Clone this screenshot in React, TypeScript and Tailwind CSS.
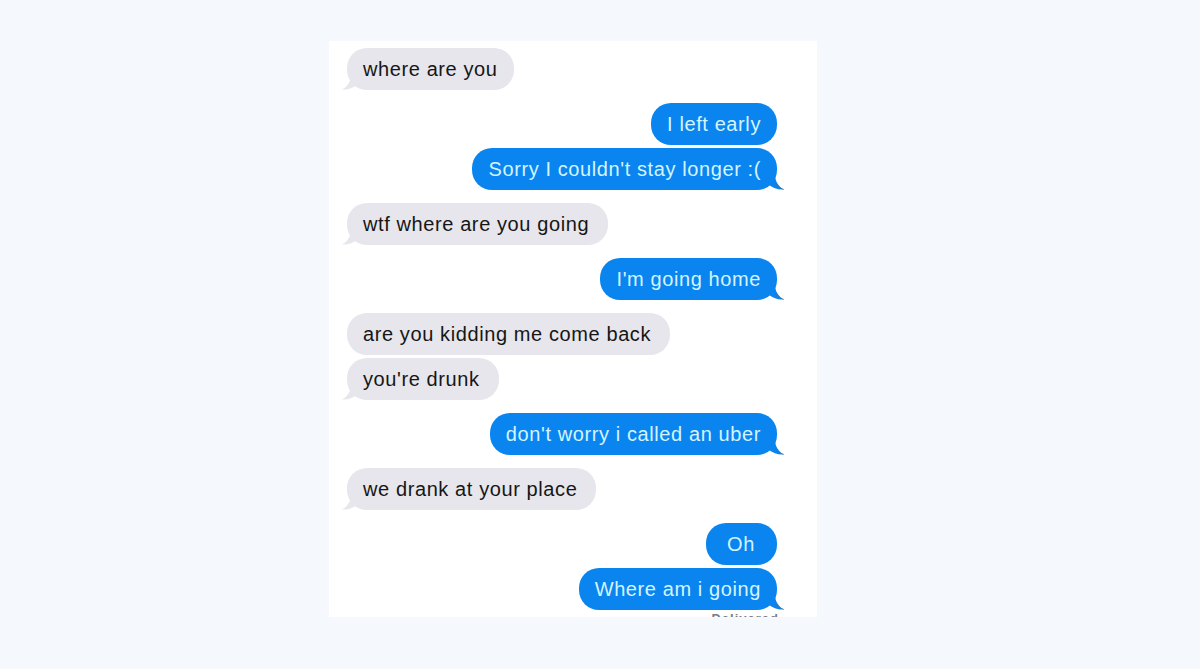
import React from 'react';

type Msg = { text: string; me: boolean; tail: boolean; gap: 'sm' | 'lg'; pad?: string };

const messages: Msg[] = [
  { text: 'where are you', me: false, tail: true, gap: 'lg', pad: 'pl-4 pr-4' },
  { text: 'I left early', me: true, tail: false, gap: 'lg' },
  { text: "Sorry I couldn't stay longer :(", me: true, tail: true, gap: 'sm' },
  { text: 'wtf where are you going', me: false, tail: true, gap: 'lg' },
  { text: "I'm going home", me: true, tail: true, gap: 'lg' },
  { text: 'are you kidding me come back', me: false, tail: false, gap: 'lg' },
  { text: "you're drunk", me: false, tail: true, gap: 'sm' },
  { text: "don't worry i called an uber", me: true, tail: true, gap: 'lg' },
  { text: 'we drank at your place', me: false, tail: true, gap: 'lg' },
  { text: 'Oh', me: true, tail: false, gap: 'lg', pad: 'pl-[21px] pr-[22px]' },
  { text: 'Where am i going', me: true, tail: true, gap: 'sm' },
];

const Bubble = ({ m, first }: { m: Msg; first: boolean }) => {
  const mt = first ? 'mt-0' : m.gap === 'sm' ? 'mt-[3px]' : 'mt-[13px]';
  const pad = m.pad ?? (m.me ? 'pl-4 pr-4' : 'pl-4 pr-[19px]');
  return (
    <div className={`flex ${m.me ? 'justify-end pr-[40px]' : 'justify-start pl-[18px]'} ${mt}`}>
      <div
        className={`relative h-[42px] flex items-center ${pad} rounded-[20px] text-[20px] tracking-[0.6px] leading-none ${
          m.me ? 'bg-[#0a85ef] text-[#d3f4ff]' : 'bg-[#e6e6ec] text-[#161616]'
        }`}
      >
        {m.text}
        {m.tail && m.me && (
          <svg className="absolute -right-[8px] bottom-0" width="18" height="16" viewBox="0 0 18 16">
            <path d="M0 0 L8 0 C8 8 12 13 17 15.5 C11 16 6 14 2 11 Z" fill="#0a85ef" />
            <path d="M8 9 C10 12 13 14 17 15.5" stroke="#5a6470" strokeWidth="1" fill="none" opacity="0.5" />
          </svg>
        )}
        {m.tail && !m.me && (
          <svg className="absolute -left-[6px] bottom-0" width="18" height="16" viewBox="0 0 18 16">
            <path d="M18 0 L10 0 C10 8 6 13 1 15.5 C7 16 12 14 16 11 Z" fill="#e6e6ec" />
          </svg>
        )}
      </div>
    </div>
  );
};

export default function App() {
  return (
    <div className="min-h-[669px] w-[1200px] bg-[#f5f9fd] pt-[41px] pl-[329px]" style={{ fontFamily: '"Liberation Sans", Arial, sans-serif' }}>
      <div className="w-[488px] h-[576px] bg-white overflow-hidden pt-[7px]">
        {messages.map((m, i) => (
          <Bubble key={i} m={m} first={i === 0} />
        ))}
        <div className="flex justify-end pr-[38px] mt-[1px]">
          <span className="text-[13px] leading-[16px] tracking-[1px] text-[#7c7c84] font-bold">Delivered</span>
        </div>
      </div>
    </div>
  );
}
